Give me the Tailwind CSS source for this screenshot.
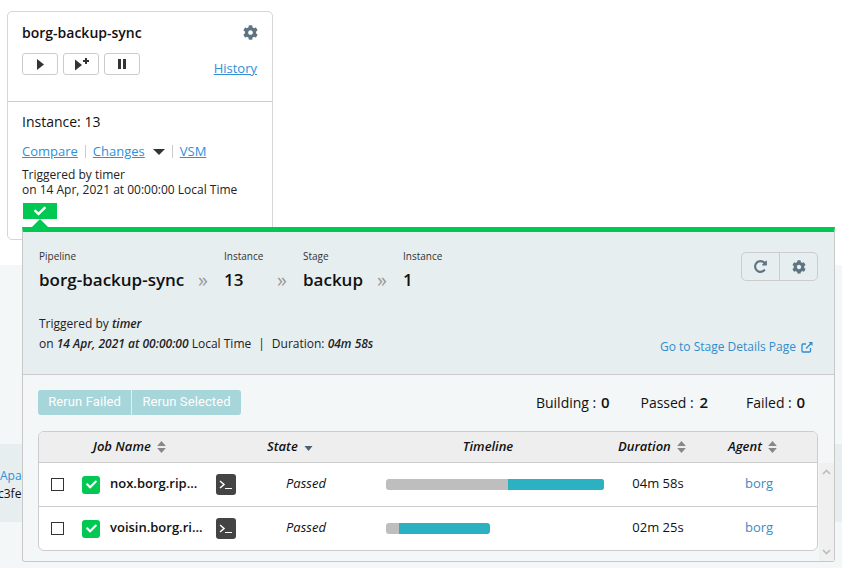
<!DOCTYPE html>
<html lang="en">

<head>
    <meta charset="UTF-8">
    <title>borg-backup-sync</title>
    <script src="https://cdn.jsdelivr.net/npm/@tailwindcss/browser@4"></script>
</head>

<body class="relative w-[842px] h-[568px] overflow-hidden bg-white text-[#111] font-['Open_Sans',sans-serif]">
    <!-- page behind the popup -->
    <div class="h-[265px] pt-[11px] pl-[7px]">
        <div class="w-[266px] h-[229px] bg-white border border-[#d6d6d6] rounded-[5px]">
            <div class="h-[90px] border-b border-[#ccc] px-[14px] pt-[9px]">
                <div class="flex justify-between items-center h-[22px]">
                    <span class="text-[14px] font-semibold">borg-backup-sync</span>
                    <svg class="w-[15px] h-[15px] fill-[#5f7482]" viewBox="0 0 512 512"><path d="M487.4 315.7l-42.6-24.6c4.3-23.2 4.3-47 0-70.2l42.6-24.6c4.9-2.8 7.1-8.6 5.5-14-11.1-35.6-30-67.8-54.7-94.6-3.8-4.1-10-5.1-14.8-2.3L380.8 110c-17.9-15.4-38.5-27.3-60.8-35.1V25.8c0-5.6-3.9-10.5-9.4-11.7-36.7-8.2-74.3-7.8-109.2 0-5.5 1.2-9.4 6.1-9.4 11.7V75c-22.2 7.9-42.8 19.8-60.8 35.1L88.7 85.5c-4.9-2.8-11-1.9-14.8 2.3-24.7 26.7-43.6 58.9-54.7 94.6-1.7 5.4.6 11.2 5.5 14L67.3 221c-4.3 23.2-4.3 47 0 70.2l-42.6 24.6c-4.9 2.8-7.1 8.6-5.5 14 11.1 35.6 30 67.8 54.7 94.6 3.8 4.1 10 5.1 14.8 2.3l42.6-24.6c17.9 15.4 38.5 27.3 60.8 35.1v49.2c0 5.6 3.9 10.5 9.4 11.7 36.7 8.2 74.3 7.8 109.2 0 5.5-1.2 9.4-6.1 9.4-11.7v-49.2c22.2-7.9 42.8-19.8 60.8-35.1l42.6 24.6c4.9 2.8 11 1.9 14.8-2.3 24.7-26.7 43.6-58.9 54.7-94.6 1.5-5.5-.7-11.3-5.6-14.1zM256 336c-44.1 0-80-35.9-80-80s35.9-80 80-80 80 35.9 80 80-35.9 80-80 80z"/></svg>
                </div>
                <div class="flex items-start mt-[10px]">
                    <button class="w-[36px] h-[22px] border border-[#ccc] rounded-[3px] flex items-center justify-center">
                        <svg class="w-[7px] h-[11px] fill-[#333]" viewBox="0 0 7 11"><path d="M0 0l7 5.500-7 5.500z"/></svg>
                    </button>
                    <button class="w-[36px] h-[22px] ml-[5px] border border-[#ccc] rounded-[3px] flex items-start justify-center pl-[1px] pt-[4px] gap-[1px]">
                        <svg class="w-[7px] h-[12px] mt-[1px] fill-[#333]" viewBox="0 0 7 11"><path d="M0 0l7 5.500-7 5.500z"/></svg>
                        <svg class="w-[6px] h-[6px] fill-[#333]" viewBox="0 0 6 6"><path d="M2 0h2v2h2v2H4v2H2V4H0V2h2z"/></svg>
                    </button>
                    <button class="w-[36px] h-[22px] ml-[5px] border border-[#ccc] rounded-[3px] flex items-center justify-center gap-[2px]">
                        <span class="w-[3px] h-[10px] bg-[#333]"></span><span class="w-[3px] h-[10px] bg-[#333]"></span>
                    </button>
                    <a href="#" class="ml-auto mr-[1px] mt-[6px] text-[13px] leading-[18px] text-[#2f8fd8] underline">History</a>
                </div>
            </div>
            <div class="px-[14px]">
                <p class="text-[14px] leading-[20px] mt-[10px]">Instance: 13</p>
                <div class="flex items-center text-[13px] leading-[18px] mt-[10px] text-[#2f8fd8]">
                    <a href="#" class="underline">Compare</a>
                    <span class="w-px h-[13px] bg-[#ccc] mx-[7px]"></span>
                    <a href="#" class="underline">Changes</a>
                    <span class="ml-[8px] w-0 h-0 border-x-[6px] border-x-transparent border-t-[6px] border-t-[#333] mt-[2px]"></span>
                    <span class="w-px h-[13px] bg-[#ccc] mx-[7px]"></span>
                    <a href="#" class="underline">VSM</a>
                </div>
                <p class="text-[12px] leading-[15px] mt-[7px] text-[#222]">Triggered by timer<br>on 14 Apr, 2021 at 00:00:00 Local Time</p>
                <div class="relative w-[34px] h-[16px] mt-[6px] ml-[1px] bg-[#00c853] flex items-center justify-center">
                    <svg class="w-[12px] h-[12px] fill-white" viewBox="0 0 512 512"><path d="M173.898 439.404l-166.400-166.400c-9.997-9.997-9.997-26.206 0-36.204l36.203-36.204c9.997-9.998 26.207-9.998 36.204 0L192 312.690 432.095 72.596c9.997-9.997 26.207-9.997 36.204 0l36.203 36.204c9.997 9.997 9.997 26.206 0 36.204l-294.400 294.401c-9.998 9.997-26.207 9.997-36.204-.001z"/></svg>
                    <span class="absolute left-[9px] top-[16px] w-0 h-0 border-x-[8px] border-x-transparent border-b-[8px] border-b-[#00c853]"></span>
                </div>
            </div>
        </div>
    </div>
    <div class="h-[179px] bg-[#f4f7f8]"></div>
    <div class="h-[78px] bg-[#e7eef0] pt-[23px] text-[12px] leading-[18px] overflow-hidden">
        <a href="#" class="block text-[#2f8fd8]">Apache</a>
        <div class="-ml-[2px]">c3fe1</div>
    </div>
    <div class="h-[46px] bg-[#f4f7f8]"></div>

    <!-- stage popup -->
    <div class="absolute left-[22px] top-[227px] w-[813px] h-[335px] border-x border-b border-[#c8c8c8] border-t-[5px] border-t-[#00c853] rounded-b-[3px] bg-[#f4f7f8]">
        <div class="relative h-[143px] bg-[#e7eef0] border-b border-[#ccc] pl-[16px] pt-[17px]">
            <div class="flex text-[10px] leading-[14px] text-[#333]">
                <span class="w-[185px]">Pipeline</span>
                <span class="w-[79px]">Instance</span>
                <span class="w-[100px]">Stage</span>
                <span>Instance</span>
            </div>
            <div class="flex items-center h-[24px] mt-[5px] text-[17px] font-semibold">
                <span class="w-[159px] whitespace-nowrap">borg-backup-sync</span>
                <span class="w-[26px] text-[#999] font-normal text-[20px] leading-none -mt-[1px]">»</span>
                <span class="w-[53px]">13</span>
                <span class="w-[26px] text-[#999] font-normal text-[20px] leading-none -mt-[1px]">»</span>
                <span class="w-[74px]">backup</span>
                <span class="w-[26px] text-[#999] font-normal text-[20px] leading-none -mt-[1px]">»</span>
                <span>1</span>
            </div>
            <p class="text-[12px] leading-[20px] mt-[22px] text-[#222]">Triggered by <b class="italic font-semibold">timer</b></p>
            <p class="text-[12px] leading-[20px] text-[#222]">on <b class="italic font-semibold">14 Apr, 2021 at 00:00:00</b> Local Time<span class="ml-[7px] mr-[7px]">|</span>Duration: <b class="italic font-semibold">04m 58s</b></p>
            <div class="absolute right-[16px] top-[20px] flex w-[77px] h-[29px] border border-[#ccc] rounded-[5px]">
                <span class="w-[38px] border-r border-[#ccc] flex items-center justify-center">
                    <svg class="w-[15px] h-[15px] fill-[#5f7482]" viewBox="0 0 1792 1792"><path d="M1664 256v448q0 26-19 45t-45 19h-448q-42 0-59-40-17-39 14-69l138-138q-148-137-349-137-104 0-198.500 40.500t-163.500 109.500-109.500 163.500-40.500 198.500 40.500 198.500 109.500 163.500 163.500 109.500 198.500 40.500q119 0 225-52t179-147q7-10 23-12 15 0 25 9l137 138q9 8 9.500 20.500t-7.500 22.500q-109 132-264 204.500t-327 72.500q-156 0-298-61t-245-164-164-245-61-298 61-298 164-245 245-164 298-61q147 0 284.500 55.500t244.500 156.500l130-129q29-31 70-14 39 17 39 59z"/></svg>
                </span>
                <span class="flex-1 flex items-center justify-center">
                    <svg class="w-[14px] h-[14px] fill-[#5f7482]" viewBox="0 0 512 512"><path d="M487.4 315.7l-42.6-24.6c4.3-23.2 4.3-47 0-70.2l42.6-24.6c4.9-2.8 7.1-8.6 5.5-14-11.1-35.6-30-67.8-54.7-94.6-3.8-4.1-10-5.1-14.8-2.3L380.8 110c-17.9-15.4-38.5-27.3-60.8-35.1V25.8c0-5.6-3.9-10.5-9.4-11.7-36.7-8.2-74.3-7.8-109.2 0-5.5 1.2-9.4 6.1-9.4 11.7V75c-22.2 7.9-42.8 19.8-60.8 35.1L88.7 85.5c-4.9-2.8-11-1.9-14.8 2.3-24.7 26.7-43.6 58.9-54.7 94.6-1.7 5.4.6 11.2 5.5 14L67.3 221c-4.3 23.2-4.3 47 0 70.2l-42.6 24.6c-4.9 2.8-7.1 8.6-5.5 14 11.1 35.6 30 67.8 54.7 94.6 3.8 4.1 10 5.1 14.8 2.3l42.6-24.6c17.9 15.4 38.5 27.3 60.8 35.1v49.2c0 5.6 3.9 10.5 9.4 11.7 36.7 8.2 74.3 7.8 109.2 0 5.5-1.2 9.4-6.1 9.4-11.7v-49.2c22.2-7.9 42.8-19.8 60.8-35.1l42.6 24.6c4.9 2.8 11 1.9 14.8-2.3 24.7-26.7 43.6-58.9 54.7-94.6 1.5-5.5-.7-11.3-5.6-14.1zM256 336c-44.1 0-80-35.9-80-80s35.9-80 80-80 80 35.9 80 80-35.9 80-80 80z"/></svg>
                </span>
            </div>
            <a href="#" class="absolute right-[21px] top-[106px] flex items-center gap-[5px] text-[12px] leading-[18px] text-[#2f8dcc]">Go to Stage Details Page
                <svg class="w-[12px] h-[12px]" viewBox="0 0 12 12" fill="none" stroke="#2f8dcc" stroke-width="1.300"><path d="M9.500 7v3a1 1 0 0 1-1 1H2a1 1 0 0 1-1-1V4a1 1 0 0 1 1-1h3"/><path d="M5 7.500L11 1.500"/><path d="M7.500 1h4v4" fill="#2f8dcc" stroke="none"/></svg>
            </a>
        </div>

        <div class="flex items-center justify-between h-[56px] pl-[15px] pr-[29px]">
            <div class="flex h-[25px] -mt-[2px] rounded-[3px] overflow-hidden bg-[#a6d5da] text-white text-[13px] tracking-[0.1px] font-['Roboto',sans-serif]">
                <span class="w-[94px] flex items-center justify-center border-r border-[#dff0f2]">Rerun Failed</span>
                <span class="w-[109px] flex items-center justify-center">Rerun Selected</span>
            </div>
            <div class="flex items-baseline text-[14px] -mt-[2px]">
                <span>Building : <b class="font-semibold text-[15px] ml-[1px]">0</b></span>
                <span class="ml-[31px]">Passed : <b class="font-semibold text-[15px] ml-[2px]">2</b></span>
                <span class="ml-[38px]">Failed : <b class="font-semibold text-[15px] ml-[1px]">0</b></span>
            </div>
        </div>

        <div class="relative">
            <div class="ml-[15px] w-[780px] border border-[#ccc] rounded-[6px] bg-white overflow-hidden">
                <div class="flex items-center h-[31px] bg-[#eee] border-b border-[#ccc] text-[13px] font-semibold italic">
                    <span class="w-[54px]"></span>
                    <span class="w-[174px] flex items-center gap-[6px]">Job Name
                        <svg class="w-[9px] h-[12px] fill-[#888]" viewBox="0 0 8 11"><path d="M4 0l4 4.500H0zM4 11L0 6.500h8z"/></svg>
                    </span>
                    <span class="w-[141px] flex items-center gap-[6px]">State
                        <svg class="w-[9px] h-[5px] fill-[#4a6070] mt-[3px]" viewBox="0 0 8 5"><path d="M0 0h8L4 5z"/></svg>
                    </span>
                    <span class="w-[160px] mr-[50px] text-center">Timeline</span>
                    <span class="w-[110px] flex items-center gap-[6px]">Duration
                        <svg class="w-[9px] h-[12px] fill-[#888]" viewBox="0 0 8 11"><path d="M4 0l4 4.500H0zM4 11L0 6.500h8z"/></svg>
                    </span>
                    <span class="flex items-center gap-[6px]">Agent
                        <svg class="w-[9px] h-[12px] fill-[#888]" viewBox="0 0 8 11"><path d="M4 0l4 4.500H0zM4 11L0 6.500h8z"/></svg>
                    </span>
                </div>
                <div class="flex items-center h-[44px] border-b border-[#ccc] text-[13px]">
                    <span class="ml-[12px] w-[13px] h-[13px] border border-[#333]"></span>
                    <span class="ml-[18px] w-[18px] h-[18px] rounded-[3px] bg-[#00c853] flex items-center justify-center">
                        <svg class="w-[11px] h-[11px] fill-white" viewBox="0 0 512 512"><path d="M173.898 439.404l-166.400-166.400c-9.997-9.997-9.997-26.206 0-36.204l36.203-36.204c9.997-9.998 26.207-9.998 36.204 0L192 312.690 432.095 72.596c9.997-9.997 26.207-9.997 36.204 0l36.203 36.204c9.997 9.997 9.997 26.206 0 36.204l-294.400 294.401c-9.998 9.997-26.207 9.997-36.204-.001z"/></svg>
                    </span>
                    <span class="ml-[10px] w-[106px] pb-[2px] font-semibold whitespace-nowrap">nox.borg.rip...</span>
                    <span class="w-[20px] h-[21px] rounded-[3px] bg-[#444] flex items-center justify-center">
                        <svg class="w-[14px] h-[10px]" viewBox="0 0 14 10" fill="none" stroke="#fff"><path d="M1 1l4 3.500-4 3.500" stroke-width="1.500"/><path d="M6 8.500h7" stroke-width="1.200"/></svg>
                    </span>
                    <span class="ml-[50px] w-[100px] pb-[2px] italic">Passed</span>
                    <span class="w-[218px] h-[11px] flex rounded-[3px] overflow-hidden bg-[#bebebe]">
                        <span class="w-[122px]"></span><span class="flex-1 bg-[#2cb1c2]"></span>
                    </span>
                    <span class="ml-[1px] w-[106px] pb-[2px] text-center">04m 58s</span>
                    <a href="#" class="ml-[13px] w-[70px] pb-[2px] text-center text-[#3b8cc4]">borg</a>
                </div>
                <div class="flex items-center h-[43px] text-[13px]">
                    <span class="ml-[12px] w-[13px] h-[13px] border border-[#333]"></span>
                    <span class="ml-[18px] w-[18px] h-[18px] rounded-[3px] bg-[#00c853] flex items-center justify-center">
                        <svg class="w-[11px] h-[11px] fill-white" viewBox="0 0 512 512"><path d="M173.898 439.404l-166.400-166.400c-9.997-9.997-9.997-26.206 0-36.204l36.203-36.204c9.997-9.998 26.207-9.998 36.204 0L192 312.690 432.095 72.596c9.997-9.997 26.207-9.997 36.204 0l36.203 36.204c9.997 9.997 9.997 26.206 0 36.204l-294.400 294.401c-9.998 9.997-26.207 9.997-36.204-.001z"/></svg>
                    </span>
                    <span class="ml-[10px] w-[106px] pb-[2px] font-semibold whitespace-nowrap">voisin.borg.ri...</span>
                    <span class="w-[20px] h-[21px] rounded-[3px] bg-[#444] flex items-center justify-center">
                        <svg class="w-[14px] h-[10px]" viewBox="0 0 14 10" fill="none" stroke="#fff"><path d="M1 1l4 3.500-4 3.500" stroke-width="1.500"/><path d="M6 8.500h7" stroke-width="1.200"/></svg>
                    </span>
                    <span class="ml-[50px] w-[100px] pb-[2px] italic">Passed</span>
                    <span class="w-[218px] h-[11px] flex">
                        <span class="w-[13px] bg-[#bebebe] rounded-l-[3px]"></span><span class="w-[91px] bg-[#2cb1c2] rounded-r-[3px]"></span>
                    </span>
                    <span class="ml-[1px] w-[106px] pb-[2px] text-center">02m 25s</span>
                    <a href="#" class="ml-[13px] w-[70px] pb-[2px] text-center text-[#3b8cc4]">borg</a>
                </div>
            </div>
            <!-- scrollbar -->
            <div class="absolute right-0 top-[32px] w-[15px] h-[98px] bg-[#f0f0f0] flex flex-col justify-between items-center py-[6px]">
                <svg class="w-[9px] h-[6px]" viewBox="0 0 9 6" fill="none" stroke="#bbb" stroke-width="1.600"><path d="M1 5l3.500-3.500L8 5"/></svg>
                <svg class="w-[9px] h-[6px]" viewBox="0 0 9 6" fill="none" stroke="#bbb" stroke-width="1.600"><path d="M1 1l3.500 3.500L8 1"/></svg>
            </div>
        </div>
    </div>
</body>

</html>
